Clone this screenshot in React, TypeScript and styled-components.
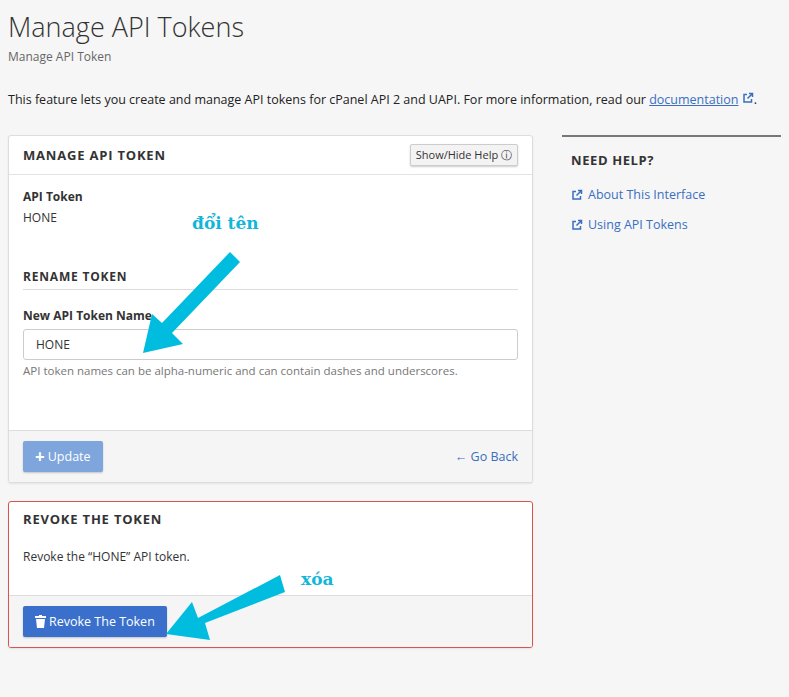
import React from "react";
import styled, { createGlobalStyle } from "styled-components";

const Global = createGlobalStyle`
  body { margin: 0; background: #f6f6f6; font-family: "Open Sans", sans-serif; color: #333; }
`;
const Page = styled.div`position: relative; padding: 0 8px; width: 789px; box-sizing: border-box; height: 697px; overflow: hidden;`;
const Title = styled.h1`font-weight: 300; font-size: 27px; margin: 9px 0 0; color: #333; line-height: 36px;`;
const Sub = styled.div`font-size: 12px; color: #666; margin-top: 3px;`;
const Intro = styled.p`font-size: 12.5px; margin: 26px 0 0; color: #222;
  a { color: #3a6fbf; text-decoration: underline; }`;
const Cols = styled.div`display: grid; grid-template-columns: 525px 1fr; gap: 29px; margin-top: 27px;`;
const Main = styled.div`display: flex; flex-direction: column; gap: 18px;`;
const Panel = styled.div<{ $danger?: boolean }>`
  background: #fff; border: 1px solid ${p => p.$danger ? "#d9534f" : "#ddd"}; border-radius: 3px;
  box-shadow: 0 1px 2px rgba(0,0,0,.08); overflow: hidden;`;
const Head = styled.div<{ $line?: boolean }>`display: flex; justify-content: space-between; align-items: center;
  padding: 0 14px; height: ${p => p.$line ? "38px" : "34px"}; border-bottom: ${p => p.$line ? "1px solid #e3e3e3" : "none"};`;
const H3 = styled.h3`margin: 0; font-size: 13px; font-weight: 700; letter-spacing: .8px; color: #333;`;
const HelpBtn = styled.button`font: 11px "Open Sans", sans-serif; color: #333; background: #f3f3f3; border: 1px solid #ccc;
  border-radius: 2px; padding: 2px 5px; box-shadow: 0 1px 2px rgba(0,0,0,.2);`;
const Body = styled.div<{ $pad?: string }>`padding: ${p => p.$pad || "14px"}; font-size: 12px;`;
const Label = styled.div<{ $gap?: number }>`font-weight: 700; font-size: 12px; margin-top: ${p => p.$gap || 0}px;`;
const Value = styled.div`margin-top: 4px; font-size: 12px;`;
const SubHead = styled.h4`margin: 42px 0 0; font-size: 12px; font-weight: 700; letter-spacing: .8px; padding-bottom: 4px; border-bottom: 1px solid #ddd;`;
const Input = styled.div`margin-top: 5px; height: 29px; border: 1px solid #ccc; border-radius: 3px; padding: 0 12px;
  display: flex; align-items: center; font-size: 12px;`;
const Hint = styled.div`margin-top: 3px; font-size: 11.5px; color: #777;`;
const Foot = styled.div`background: #f5f5f5; border-top: 1px solid #ddd; padding: 10px 14px; display: flex; justify-content: space-between; align-items: center;`;
const Btn = styled.button<{ $faded?: boolean }>`font: 12.5px "Open Sans", sans-serif; color: #fff; border: 0; border-radius: 2px;
  background: ${p => p.$faded ? "#7ea6dd" : "#3a70cc"}; height: 31px; padding: 0 12px; display: flex; align-items: center; gap: 3px;
  box-shadow: 0 1px 2px rgba(0,0,0,.2);`;
const Link = styled.a`color: #3a6fbf; font-size: 12.5px; display: flex; align-items: center; gap: 5px; text-decoration: none;`;
const Side = styled.div`border-top: 2px solid #777; padding: 14px 9px;`;
const SideH = styled.h3`margin: 0 0 17px; font-size: 13px; font-weight: 700; letter-spacing: .6px;`;
const SideLinks = styled.div`display: flex; flex-direction: column; gap: 13px;`;
const Overlay = styled.svg`position: absolute; left: 0; top: 0; pointer-events: none;`;
const Note = styled.text`font-family: "DejaVu Serif", serif; font-weight: 700; font-size: 17px; fill: #12b6da;`;

const Ext = () => (
  <svg width="12" height="12" viewBox="0 0 24 24" fill="none" stroke="#3a6fbf" strokeWidth="3">
    <path d="M14 3h7v7M21 3l-10 10M19 14v6H4V5h6" />
  </svg>
);

export default function App() {
  return (
    <Page>
      <Global />
      <Title>Manage API Tokens</Title>
      <Sub>Manage API Token</Sub>
      <Intro>This feature lets you create and manage API tokens for cPanel API 2 and UAPI. For more information, read our <a>documentation</a> <Ext />.</Intro>
      <Cols>
        <Main>
          <Panel>
            <Head $line><H3>MANAGE API TOKEN</H3><HelpBtn>Show/Hide Help ⓘ</HelpBtn></Head>
            <Body $pad="13px 14px 52px">
              <Label>API Token</Label>
              <Value>HONE</Value>
              <SubHead>RENAME TOKEN</SubHead>
              <Label $gap={17}>New API Token Name</Label>
              <Input>HONE</Input>
              <Hint>API token names can be alpha-numeric and can contain dashes and underscores.</Hint>
            </Body>
            <Foot>
              <Btn $faded><span style={{ fontSize: 17, fontWeight: 700 }}>+</span>Update</Btn>
              <Link>← Go Back</Link>
            </Foot>
          </Panel>
          <Panel $danger>
            <Head><H3>REVOKE THE TOKEN</H3></Head>
            <Body $pad="12px 14px 30px">Revoke the “HONE” API token.</Body>
            <Foot>
              <Btn>
                <svg width="11" height="13" viewBox="0 0 11 13"><rect x="0" y="1" width="11" height="2" fill="#fff" /><rect x="4" y="0" width="3" height="2" fill="#fff" /><path d="M1 4h9l-1 9H2z" fill="#fff" /></svg>
                Revoke The Token
              </Btn>
            </Foot>
          </Panel>
        </Main>
        <Side>
          <SideH>NEED HELP?</SideH>
          <SideLinks>
            <Link><Ext />About This Interface</Link>
            <Link><Ext />Using API Tokens</Link>
          </SideLinks>
        </Side>
      </Cols>
      <Overlay width="789" height="697">
        <Note x="192" y="229">đổi tên</Note>
        <Note x="301" y="585">xóa</Note>
        <path d="M230 252 L240 262 L172 333 L183 344 L143 353 L152 314 L162 323 Z" fill="#00bde0" />
        <path d="M280 575 L285 592 L205 623 L210 640 L166 634 L192 602 L198 618 Z" fill="#00bde0" />
      </Overlay>
    </Page>
  );
}
